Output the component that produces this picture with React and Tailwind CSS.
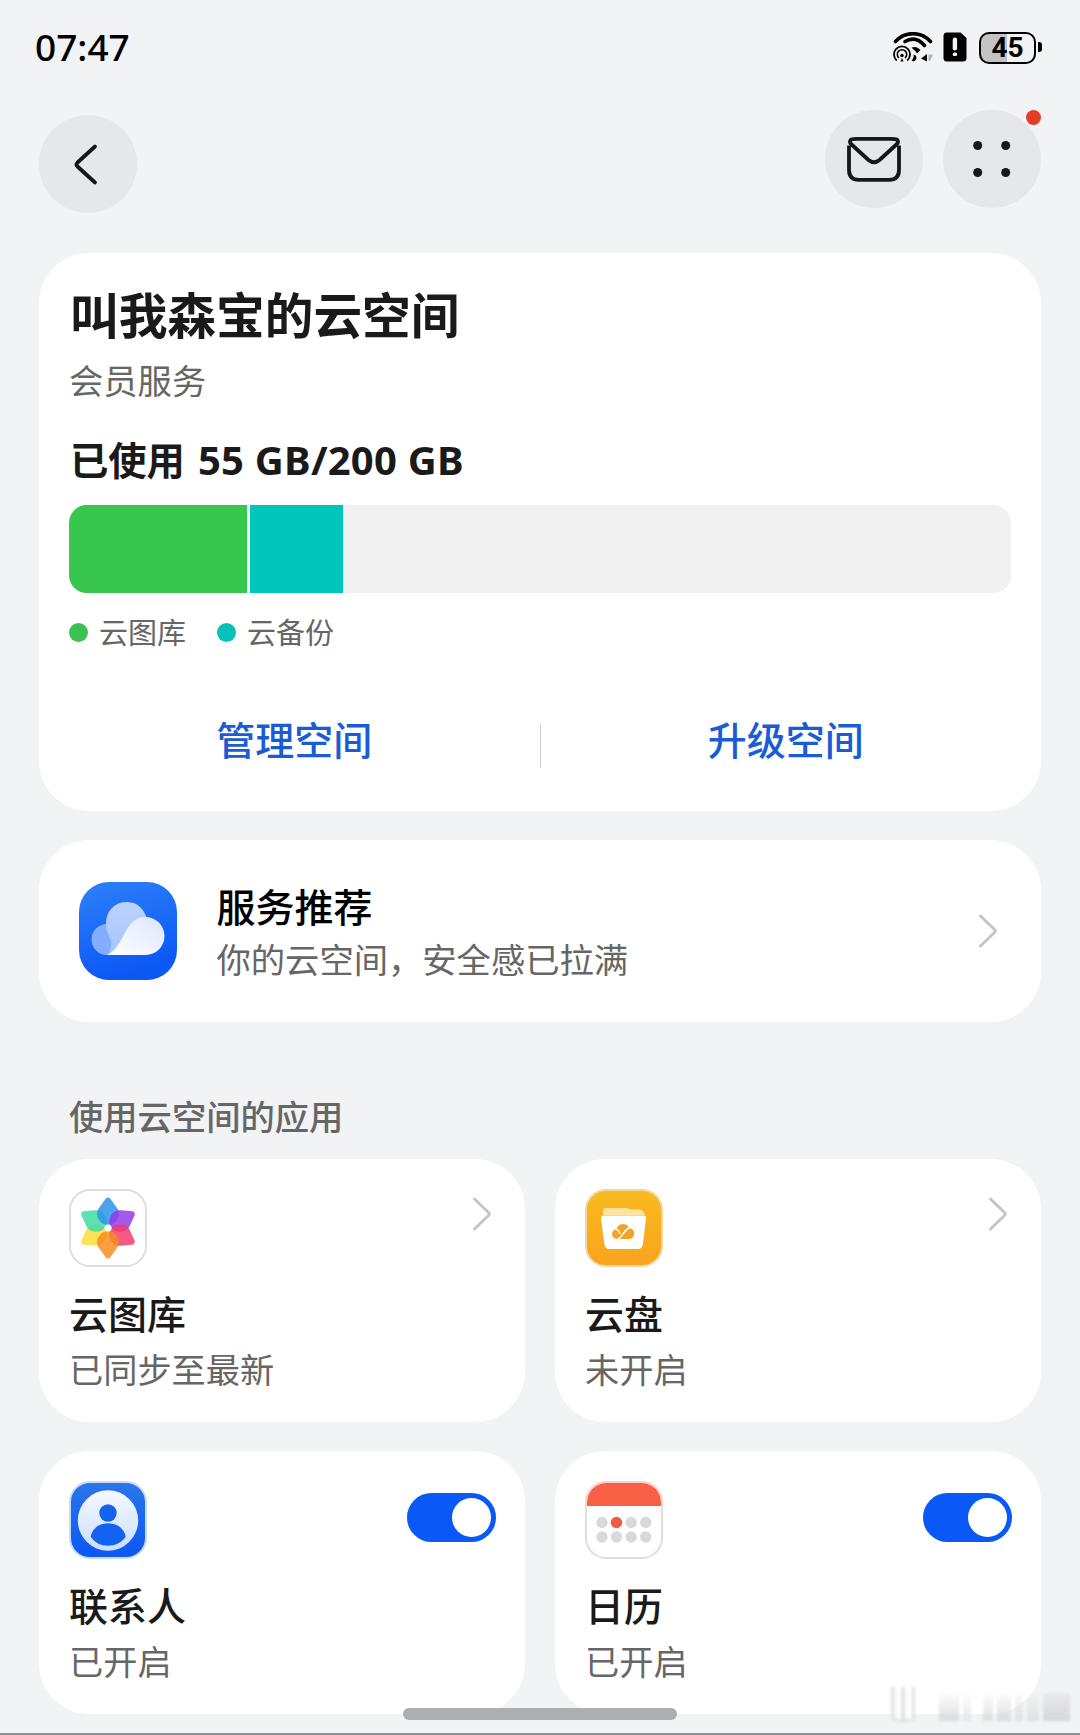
import React from "react";

const FONT = "font-['Noto_Sans_CJK_SC',sans-serif]";

function StatusBar() {
  return (
    <div className="flex h-[94px] items-center justify-between pl-[35px] pr-[38px]">
      <div className="relative -top-px font-['Noto_Sans',sans-serif] text-[37px] font-medium leading-none text-black">07:47</div>
      <div className="flex items-center">
        <svg className="mr-[10px] h-[30px] w-[40px]" viewBox="0 0 40 30" fill="none">
          <path d="M2.500 9.500C12-1 28-1 37.500 9.500" stroke="#000" strokeWidth="3.600" strokeLinecap="round" />
          <path d="M12 9.500c7-4 14-2.500 19.500 4" stroke="#000" strokeWidth="3.600" strokeLinecap="round" />
          <path d="M18.500 15.500c4.500-1.500 7 .5 9 2.500l-3.500 3.500c-1.500-2.500-3-3.500-5.500-6z" fill="#000" />
          <path d="M3.800 28.500a8 8 0 1 1 10.400 0" stroke="#000" strokeWidth="1.800" />
          <path d="M6 26a4.700 4.700 0 1 1 6 0" stroke="#000" strokeWidth="1.600" />
          <circle cx="9" cy="23.500" r="1.700" fill="#000" />
          <path d="M7.500 29.500 9 26l1.500 3.500z" fill="#000" />
          <path d="M20.500 22.500c4 1 4 5 0 7l-2-1c2-2 2.500-4 2-6z" fill="#000" />
          <path d="M28 26.500 34 22v7.500z" fill="#000" />
          <path d="M35.500 22.500h4.500l-3 6.500h-1.500z" fill="#b5b6b8" />
        </svg>
        <svg className="mr-[12px] h-[30px] w-[24px]" viewBox="0 0 24 30">
          <path d="M3 0.500h14.500L23.500 6v20a3.500 3.500 0 0 1-3.500 3.500H4A3.500 3.500 0 0 1 .5 26V3.500A3 3 0 0 1 3 .5z" fill="#000" />
          <rect x="9.700" y="5.500" width="4.400" height="13" rx="2.200" fill="#f1f3f5" />
          <rect x="9.700" y="20.500" width="4.400" height="3.500" rx="1.500" fill="#f1f3f5" />
        </svg>
        <div className="relative top-[1px] flex h-[32px] w-[57px] items-center justify-center rounded-[10px] border-2 border-black bg-[linear-gradient(90deg,#c2c3c5_50%,#f1f3f5_50%)]">
          <span className="font-[Roboto,sans-serif] text-[28px] font-bold leading-[28px] text-black">45</span>
        </div>
        <div className="ml-[2px] h-[10px] w-[4px] rounded-r-[3px] bg-black" />
      </div>
    </div>
  );
}

function Toolbar() {
  return (
    <div className="flex items-start justify-between px-[39px] pt-[16px]">
      <button className="mt-[5px] flex h-[98px] w-[98px] items-center justify-center rounded-full bg-[#e5e7e9]">
        <svg className="h-[98px] w-[98px]" viewBox="0 0 98 98" fill="none">
          <path d="M56 31.500 38.500 47.500q-2 2 0 4L56 67.500" stroke="#15171a" strokeWidth="3.800" strokeLinecap="round" strokeLinejoin="round" />
        </svg>
      </button>
      <div className="flex gap-[20px]">
        <button className="h-[98px] w-[98px] rounded-full bg-[#e5e7e9]">
          <svg className="h-[98px] w-[98px]" viewBox="0 0 98 98" fill="none" stroke="#15171a" strokeWidth="3.800" strokeLinejoin="round">
            <path d="M26 29.500Q28 28.900 31.500 28.900H66.500Q70 28.900 72 29.500 74 31.500 72 34L54.500 50Q49 54.500 43.500 50L26 34Q24 31.500 26 29.500Z" />
            <path d="M24 35.500V60q0 9.800 9.800 9.800H64.200Q74 69.800 74 60V35.500" />
          </svg>
        </button>
        <button className="relative h-[98px] w-[98px] rounded-full bg-[#e5e7e9]">
          <svg className="h-[98px] w-[98px]" viewBox="0 0 98 98" fill="#15171a">
            <circle cx="34.700" cy="35.500" r="4.500" />
            <circle cx="62.700" cy="35.500" r="4.500" />
            <circle cx="34.700" cy="62.500" r="4.500" />
            <circle cx="62.700" cy="62.500" r="4.500" />
          </svg>
          <span className="absolute right-0 top-0 h-[15px] w-[15px] rounded-full bg-[#e23d28]" />
        </button>
      </div>
    </div>
  );
}

function Legend({ color, children }) {
  return (
    <div className="flex items-center gap-[11px]">
      <span className={"h-[19px] w-[19px] rounded-full " + color} />
      <span className="relative -top-px text-[29px] leading-[36px] text-[#666]">{children}</span>
    </div>
  );
}

function StorageCard() {
  return (
    <section className="h-[558px] rounded-[50px] bg-white px-[30px] pt-[30px]">
      <h1 className="ml-px text-[48.700px] font-bold leading-[60px] text-[#1a1a1a]">叫我森宝的云空间</h1>
      <p className="mt-[14px] text-[34.300px] leading-[44px] text-[#666]">会员服务</p>
      <div className="ml-px mt-[32px] flex h-[50px] items-center gap-[13px] text-[38.300px] font-bold leading-[50px] text-[#1a1a1a]">
        <span className="relative top-px">已使用</span>
        <span className="relative top-[2px] font-['Noto_Sans',sans-serif] text-[40px] tracking-[0.250px]">55 GB/200 GB</span>
      </div>
      <div className="mt-[22px] flex h-[88px] overflow-hidden rounded-[18px] bg-[#f1f1f1]">
        <div className="w-[178px] bg-[#39c64f]" />
        <div className="w-[3px] bg-[#e9f8f5]" />
        <div className="w-[93px] bg-[#00c5bb]" />
      </div>
      <div className="mt-[19px] flex h-[40px] items-center gap-[31px]">
        <Legend color="bg-[#3ac252]">云图库</Legend>
        <Legend color="bg-[#07c2b8]">云备份</Legend>
      </div>
      <div className="mt-[72px] flex h-[44px] gap-[20px] text-[39px] font-medium leading-[28px] text-[#1a5bd6]">
        <div className="flex-1 text-center">管理空间</div>
        <div className="w-px bg-[#ccc]" />
        <div className="flex-1 text-center">升级空间</div>
      </div>
    </section>
  );
}

function Chevron({ className }) {
  return (
    <svg className={"h-[36px] w-[20px] " + className} viewBox="0 0 20 36" fill="none">
      <path d="M2.500 3 16.500 16.500q1.500 1.500 0 3L2.500 33" stroke="#c4c5c6" strokeWidth="3" strokeLinecap="round" strokeLinejoin="round" />
    </svg>
  );
}

function CloudIcon() {
  return (
    <svg className="h-[98px] w-[98px]" viewBox="0 0 98 98">
      <defs>
        <linearGradient id="cBg" x1="0" y1="0" x2="0.300" y2="1"><stop stopColor="#2f80fa" /><stop offset="1" stopColor="#0b58f5" /></linearGradient>
        <linearGradient id="cMid" x1="0" y1="0" x2="0" y2="1"><stop stopColor="#bdd3ff" /><stop offset="1" stopColor="#a5c4ff" /></linearGradient>
        <linearGradient id="cFront" x1="1" y1="0" x2="0" y2="1"><stop stopColor="#dbe6ff" /><stop offset="1" stopColor="#fff" /></linearGradient>
      </defs>
      <rect width="98" height="98" rx="30" fill="url(#cBg)" />
      <path d="M28 42a15.500 15.500 0 1 0 0 31h16V52Q36 42 28 42z" fill="#85adff" />
      <path d="M48 20c-15 0-24 13-20 29 5 11 6 13 1 24h20l20-31C67 29 60 20 48 20z" fill="url(#cMid)" />
      <path d="M28 73C46 66 44 35 66.500 35a19 19 0 0 1 0 38z" fill="url(#cFront)" />
    </svg>
  );
}

function ServiceCard() {
  return (
    <section className="mt-[29px] flex h-[182px] items-center rounded-[50px] bg-white pl-[40px] pr-[43px]">
      <CloudIcon />
      <div className="ml-[39.500px] flex-1">
        <div className="relative -top-px text-[39px] font-medium leading-[54px] text-black">服务推荐</div>
        <div className="text-[34.300px] leading-[51px] text-[#666]">你的云空间，安全感已拉满</div>
      </div>
      <Chevron className="" />
    </section>
  );
}

function GalleryIcon() {
  const petals = [
    ["#fbdc35", 240],
    ["#3fdca4", 300],
    ["#2a93ec", 0],
    ["#9338ea", 60],
    ["#f23a6b", 120],
    ["#fa8a20", 180],
  ];
  return (
    <svg className="h-[78px] w-[78px]" viewBox="0 0 78 78">
      <rect x="1" y="1" width="76" height="76" rx="20" fill="#fff" stroke="#dedede" strokeWidth="2" />
      {petals.map(([c, r]) => (
        <path key={r} transform={`rotate(${r} 39 39)`} d="M36.800 9.500Q39 7.300 41.200 9.500L48 19C50.500 22.500 50.500 27 48.500 30Q45 36 39 36T29.500 30C27.500 27 27.500 22.500 30 19Z" fill={c} fillOpacity="0.840" />
      ))}
      <circle cx="39" cy="39" r="3.500" fill="#fff" />
    </svg>
  );
}

function DriveIcon() {
  return (
    <svg className="h-[78px] w-[78px]" viewBox="0 0 78 78">
      <defs>
        <linearGradient id="dBg" x1="0" y1="0" x2="0" y2="1"><stop stopColor="#f9bb20" /><stop offset="1" stopColor="#f9a31c" /></linearGradient>
      </defs>
      <rect x="1" y="1" width="76" height="76" rx="20" fill="url(#dBg)" stroke="#f0d6a6" strokeWidth="2" />
      <path d="M18 26v-4q0-3 3-3h20q2 0 4 1.500H55q3 0 5 5.500z" fill="#fde2a0" />
      <path d="M18 26.500h41q2.200 0 2 2.500L58 55q-.7 5-5.500 5H24.500q-4.500 0-5.200-5L16 29Q15.800 26.500 18 26.500z" fill="#fff" />
      <g fill="#f0a42a">
        <circle cx="32" cy="45" r="5" />
        <circle cx="38" cy="42" r="7" />
        <circle cx="43.800" cy="44.500" r="5.500" />
        <rect x="32" y="42" width="12" height="8" />
      </g>
      <path d="M32.500 50.500c6-3 5-9 13-12.500M30.500 40q3.500 1 4.500 5" fill="none" stroke="#fff" strokeWidth="1.400" />
    </svg>
  );
}

function ContactsIcon() {
  return (
    <svg className="h-[78px] w-[78px]" viewBox="0 0 78 78">
      <defs>
        <linearGradient id="pBg" x1="0" y1="0" x2="0" y2="1"><stop stopColor="#2b76ea" /><stop offset="1" stopColor="#0a57f5" /></linearGradient>
        <linearGradient id="pFg" x1="0" y1="0" x2="0" y2="1"><stop stopColor="#f5f8ff" /><stop offset="1" stopColor="#cbdeff" /></linearGradient>
      </defs>
      <rect x="1" y="1" width="76" height="76" rx="20" fill="url(#pBg)" stroke="#c9dcfa" strokeWidth="2" />
      <circle cx="39" cy="39.500" r="30.200" fill="url(#pFg)" />
      <circle cx="39" cy="32" r="8.700" fill="#1463f0" />
      <path d="M21.700 56C23 47.500 30 42.300 39 42.300S55.500 47.500 56.700 56Q50 64.700 39 64.700T21.700 56z" fill="#1463f0" />
    </svg>
  );
}

function CalendarIcon() {
  const xs = [17, 31.5, 46.2, 60.7];
  return (
    <svg className="h-[78px] w-[78px]" viewBox="0 0 78 78">
      <rect x="1" y="1" width="76" height="76" rx="20" fill="#fff" stroke="#dedede" strokeWidth="2" />
      <path d="M2 25v-4A19 19 0 0 1 21 2h36a19 19 0 0 1 19 19v4z" fill="#f96146" />
      <path d="M1 25v-4A20 20 0 0 1 21 1h36a20 20 0 0 1 20 20v4" fill="none" stroke="#fbd3cc" strokeWidth="2" />
      {xs.map((x, i) => (
        <g key={x} fill="#d9d8dd">
          <circle cx={x} cy="41.500" r="5.700" fill={i === 1 ? "#f25a48" : "#d9d8dd"} />
          <circle cx={x} cy="56" r="5.700" />
        </g>
      ))}
    </svg>
  );
}

function Toggle() {
  return (
    <div className="mr-[-1px] mt-[12px] flex h-[49px] w-[89px] items-center justify-end rounded-full bg-[#0a59f7] pr-[5px]">
      <div className="h-[39px] w-[39px] rounded-full bg-white" />
    </div>
  );
}

function AppCard({ icon, title, status, toggle }) {
  return (
    <section className="h-[263px] rounded-[50px] bg-white px-[30px] pt-[30px]">
      <div className="flex h-[78px] items-start justify-between">
        {icon}
        {toggle ? <Toggle /> : <Chevron className="mr-[3px] mt-[7px]" />}
      </div>
      <div className="mt-[20px] text-[39px] font-medium leading-[50px] text-[#1a1a1a]">{title}</div>
      <div className="mt-[9px] text-[34.200px] leading-[44px] text-[#666]">{status}</div>
    </section>
  );
}

function Watermark() {
  return (
    <div className="absolute bottom-[12px] right-[10px] flex h-[34px] items-end gap-[4px] opacity-80 blur-[1.500px]">
      <div className="h-[34px] w-[24px] rounded-b-[5px] border-b border-[#bbb] bg-[linear-gradient(90deg,#d5d5d5,#fff_25%,#fff_40%,#ccc_50%,#fff_62%,#fff_80%,#d0d0d0)]" />
      <div className="ml-[20px] h-[30px] w-[20px] bg-gradient-to-b from-transparent to-[#d6d6d8]" />
      <div className="h-[30px] w-[8px] bg-gradient-to-b from-transparent to-[#e4e4e6]" />
      <div className="ml-[8px] h-[30px] w-[10px] bg-gradient-to-b from-transparent to-[#d9d9db]" />
      <div className="h-[30px] w-[14px] bg-gradient-to-b from-transparent to-[#d6d6d8]" />
      <div className="h-[30px] w-[8px] bg-gradient-to-b from-transparent to-[#dcdcde]" />
      <div className="h-[30px] w-[12px] bg-gradient-to-b from-transparent to-[#dcdcde]" />
      <div className="h-[28px] w-[27px] bg-gradient-to-b from-[#e8e8ea] to-[#cfcfd1]" />
    </div>
  );
}

export default function App() {
  return (
    <div className={"relative h-[1735px] w-[1080px] overflow-hidden border-b-2 border-[#8e8f91] bg-[#f1f3f5] " + FONT}>
      <StatusBar />
      <Toolbar />
      <main className="mx-[39px] mt-[40px]">
        <StorageCard />
        <ServiceCard />
        <h2 className="ml-[30px] mt-[71px] text-[34.300px] font-medium leading-[44px] text-[#666]">使用云空间的应用</h2>
        <div className="mt-[22px] grid grid-cols-2 gap-x-[30px] gap-y-[29px]">
          <AppCard icon={<GalleryIcon />} title="云图库" status="已同步至最新" />
          <AppCard icon={<DriveIcon />} title="云盘" status="未开启" />
          <AppCard icon={<ContactsIcon />} title="联系人" status="已开启" toggle />
          <AppCard icon={<CalendarIcon />} title="日历" status="已开启" toggle />
        </div>
      </main>
      <Watermark />
      <div className="absolute bottom-[13px] left-[403px] h-[12px] w-[274px] rounded-full bg-[#adaeaf]" />
    </div>
  );
}
